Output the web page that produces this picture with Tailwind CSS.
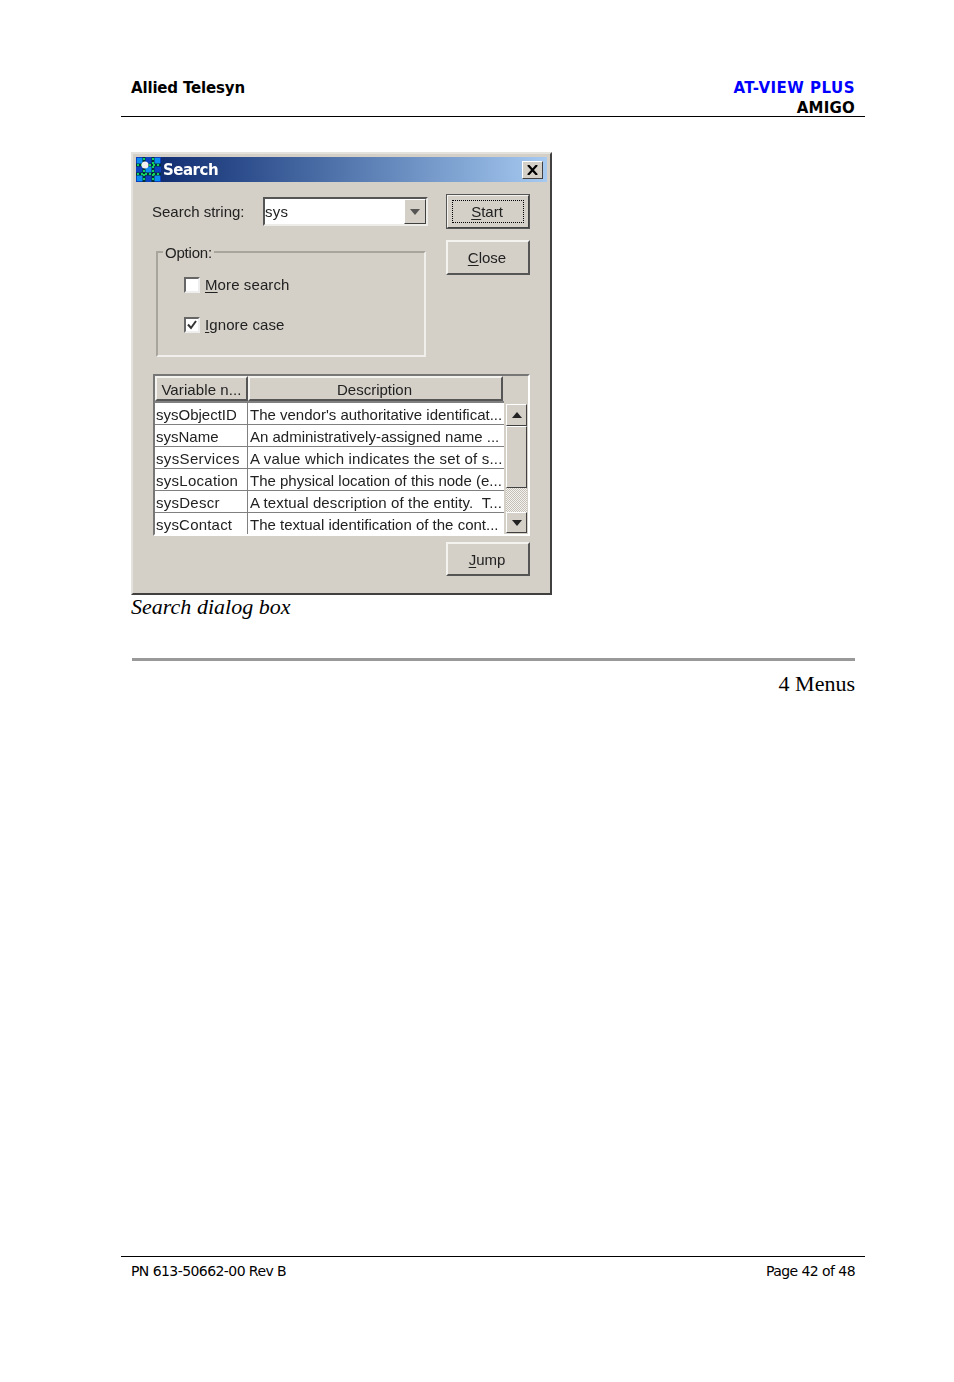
<!DOCTYPE html>
<html lang="en">
<head>
  <meta charset="UTF-8" />
  <title>Search dialog box</title>
  <script src="https://cdn.jsdelivr.net/npm/@tailwindcss/browser@4"></script>
</head>
<body class="bg-white text-black font-['Liberation_Sans',sans-serif]">
<div class="w-[954px] h-[1382px] pl-[121px] flex flex-col">

  <!-- Page header -->
  <div class="w-[744px] h-[40px] mt-[77px] border-b border-black pt-[1px] px-[10px] flex justify-between font-['DejaVu_Sans',sans-serif] font-bold text-[15px] leading-[20px]">
    <div class="tracking-[-0.17px]">Allied Telesyn</div>
    <div class="text-right">
      <div class="text-[#0000ff] tracking-[0.48px]">AT-VIEW PLUS</div>
      <div class="tracking-[0.2px]">AMIGO</div>
    </div>
  </div>

  <!-- Dialog -->
  <div class="ml-[10px] mt-[35px] w-[421px] h-[443px] bg-[#d4d0c8] border-2 border-t-[#e4e2dc] border-l-[#e4e2dc] border-r-[#404040] border-b-[#404040] pt-[3px] px-[3px] text-[15px] text-[#222] blur-[0.35px]">
    <div class="h-[25px] flex items-center justify-between bg-gradient-to-r from-[#0a246a] to-[#a6caf0] pr-[4px]">
      <div class="flex items-center gap-[2px]">
        <svg width="25" height="25" viewBox="0 0 25 25">
          <rect width="25" height="25" fill="#0a40c0"/>
          <rect x="1" y="1" width="6" height="6" fill="#0a8cf0"/>
          <rect x="18" y="1" width="6" height="6" fill="#0a8cf0"/>
          <rect x="1" y="18" width="6" height="6" fill="#0a8cf0"/>
          <rect x="18" y="18" width="6" height="6" fill="#0a8cf0"/>
          <rect x="9" y="9" width="7" height="7" fill="#0a8cf0"/>
          <path d="M8 0v25M17 0v25M0 8h25M0 17h25" stroke="#04303a" stroke-width="3"/>
          <path d="M8 1v23M17 1v23M1 8h23M1 17h23" stroke="#10d060" stroke-width="2" stroke-dasharray="2 2"/>
          <circle cx="9" cy="8" r="3.5" fill="#f0f0f0"/>
        </svg>
        <span class="text-white font-bold text-[15px] pt-[2px] font-['DejaVu_Sans',sans-serif] tracking-[-0.5px]">Search</span>
      </div>
      <div class="w-[21px] h-[18px] flex items-center justify-center bg-[#d4d0c8] border border-t-white border-l-white border-r-[#404040] border-b-[#404040]">
        <svg width="11" height="10" viewBox="0 0 11 10"><path d="M1 0l9 10M10 0L1 10" stroke="#000" stroke-width="2.2"/></svg>
      </div>
    </div>

    <div class="flex mt-[12px]">
      <!-- Left column -->
      <div class="w-[310px]">
        <div class="flex items-center h-[29px] mt-[3px]">
          <span class="ml-[16px] w-[111px] pt-[2px]">Search string:</span>
          <div class="w-[165px] h-[29px] flex items-center bg-white border-2 border-t-[#555] border-l-[#555] border-r-[#eeece8] border-b-[#eeece8]">
            <span class="flex-1 pt-[2px] tracking-[0.3px]">sys</span>
            <div class="w-[22px] h-[25px] flex items-center justify-center bg-[#d4d0c8] border border-t-white border-l-white border-r-[#404040] border-b-[#404040]">
              <svg width="10" height="6" viewBox="0 0 10 6"><path d="M0 0h10L5 6z" fill="#555"/></svg>
            </div>
          </div>
        </div>
        <!-- Option group -->
        <div class="relative ml-[20px] mt-[25px] w-[270px] h-[106px] border-2 border-t-[#a8a59d] border-l-[#a8a59d] border-r-[#f0efeb] border-b-[#f0efeb] pl-[26px] pt-[19px]">
          <span class="absolute left-[5px] top-[-9px] px-[2px] bg-[#d4d0c8] leading-[18px] tracking-[-0.2px]">Option:</span>
          <div class="flex items-center gap-[5px] h-[26px]">
            <span class="w-[16px] h-[16px] bg-white border-2 border-t-[#666] border-l-[#666] border-r-[#eee] border-b-[#eee]"></span>
            <span class="tracking-[0.1px]"><u class="underline-offset-2">M</u>ore search</span>
          </div>
          <div class="flex items-center gap-[5px] h-[26px] mt-[14px]">
            <span class="w-[16px] h-[16px] bg-white border-2 border-t-[#666] border-l-[#666] border-r-[#eee] border-b-[#eee] flex items-center justify-center">
              <svg width="10" height="10" viewBox="0 0 10 10"><path d="M1 4.5l3 3.5 5-7" fill="none" stroke="#333" stroke-width="2"/></svg>
            </span>
            <span class="tracking-[0.1px]"><u class="underline-offset-2">I</u>gnore case</span>
          </div>
        </div>
      </div>
      <!-- Buttons -->
      <div class="flex flex-col gap-[11px]">
        <div class="w-[84px] h-[35px] p-[4px] bg-[#d4d0c8] border-2 border-t-[#f4f3f0] border-l-[#f4f3f0] border-r-[#404040] border-b-[#404040] outline outline-1 -outline-offset-1 outline-[#555]">
          <div class="w-full h-full flex items-center justify-center pr-[2px] pt-[2px] border border-dotted border-black">
            <span><u class="underline-offset-2">S</u>tart</span>
          </div>
        </div>
        <div class="w-[84px] h-[35px] flex items-center justify-center pr-[2px] pt-[1px] bg-[#d4d0c8] border-2 border-t-[#f4f3f0] border-l-[#f4f3f0] border-r-[#555] border-b-[#555]">
          <span><u class="underline-offset-2">C</u>lose</span>
        </div>
      </div>
    </div>

    <!-- Variable table -->
    <div class="ml-[17px] mt-[17px] w-[377px] h-[162px] border-2 border-t-[#777] border-l-[#777] border-r-white border-b-white flex">
      <div class="w-[349px] flex flex-col">
        <div class="flex h-[27px] shrink-0 border-b-2 border-[#808080]">
          <div class="w-[93px] flex items-center justify-center pt-[3px] tracking-[0.1px] bg-[#d4d0c8] border-2 border-t-[#f4f3f0] border-l-[#f4f3f0] border-r-[#555] border-b-[#555]">Variable n...</div>
          <div class="w-[255px] flex items-center justify-center pt-[3px] pr-[2px] bg-[#d4d0c8] border-2 border-t-[#f4f3f0] border-l-[#f4f3f0] border-r-[#555] border-b-[#555]">Description</div>
        </div>
        <div class="grid grid-cols-[93px_256px] auto-rows-[22px] bg-white leading-[23px] whitespace-nowrap overflow-hidden">
          <div class="border-b border-r border-[#808080] pl-[1px]">sysObjectID</div><div class="border-b border-[#808080] pl-[2px]">The vendor's authoritative identificat...</div>
          <div class="border-b border-r border-[#808080] pl-[1px]">sysName</div><div class="border-b border-[#808080] pl-[2px]">An administratively-assigned name ...</div>
          <div class="border-b border-r border-[#808080] pl-[1px] tracking-[0.35px]">sysServices</div><div class="border-b border-[#808080] pl-[2px] tracking-[0.19px]">A value which indicates the set of s...</div>
          <div class="border-b border-r border-[#808080] pl-[1px] tracking-[0.27px]">sysLocation</div><div class="border-b border-[#808080] pl-[2px]">The physical location of this node (e...</div>
          <div class="border-b border-r border-[#808080] pl-[1px] tracking-[0.25px]">sysDescr</div><div class="border-b border-[#808080] pl-[2px] tracking-[0.12px]">A textual description of the entity.&nbsp; T...</div>
          <div class="border-r border-[#808080] pl-[1px] tracking-[0.2px]">sysContact</div><div class="pl-[2px]">The textual identification of the cont...</div>
        </div>
      </div>
      <!-- Scrollbar -->
      <div class="flex-1 flex flex-col pt-[28px] pl-[2px]">
        <div class="w-[21px] h-[22px] flex items-center justify-center bg-[#d4d0c8] border border-t-white border-l-white border-r-[#404040] border-b-[#404040]">
          <svg width="10" height="6" viewBox="0 0 10 6"><path d="M5 0l5 6H0z" fill="#222"/></svg>
        </div>
        <div class="w-[21px] h-[62px] bg-[#d4d0c8] border border-t-white border-l-white border-r-[#404040] border-b-[#404040]"></div>
        <div class="w-[21px] h-[24px] bg-[repeating-conic-gradient(#f4f3f0_0_25%,#c4c0b8_0_50%)] bg-size-[2px_2px]"></div>
        <div class="w-[21px] h-[21px] flex items-center justify-center bg-[#d4d0c8] border border-t-white border-l-white border-r-[#404040] border-b-[#404040]">
          <svg width="10" height="6" viewBox="0 0 10 6"><path d="M0 0h10L5 6z" fill="#222"/></svg>
        </div>
      </div>
    </div>

    <div class="mt-[6px] ml-[310px] w-[84px] h-[34px] flex items-center justify-center pr-[2px] pt-[2px] bg-[#d4d0c8] border-2 border-t-[#f4f3f0] border-l-[#f4f3f0] border-r-[#555] border-b-[#555]">
      <span><u class="underline-offset-2">J</u>ump</span>
    </div>
  </div>

  <!-- Caption -->
  <div class="ml-[10px] font-['Liberation_Serif',serif] italic text-[22px] leading-[23px] tracking-[0.02px]">Search dialog box</div>

  <!-- Section footer -->
  <div class="ml-[11px] mt-[40px] w-[723px] border-t-[3px] border-[#999] text-right font-['Liberation_Serif',serif] text-[22px] leading-[26px] pt-[10px]">4 Menus</div>

  <!-- Page footer -->
  <div class="mt-auto mb-[102px] w-[744px] border-t border-black px-[10px] pt-[5px] flex justify-between font-['DejaVu_Sans',sans-serif] text-[14px] leading-[18px] tracking-[-0.57px]">
    <span>PN 613-50662-00 Rev B</span>
    <span>Page 42 of 48</span>
  </div>
</div>
</body>
</html>
